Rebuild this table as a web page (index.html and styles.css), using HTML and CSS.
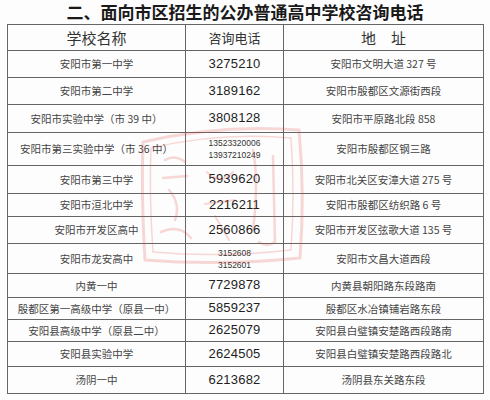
FILE: index.html
```html
<!DOCTYPE html>
<html lang="zh">
<head>
<meta charset="utf-8">
<link rel="stylesheet" href="styles.css">
</head>
<body>
<div class="page">
  <h1 class="title">二、面向市区招生的公办普通高中学校咨询电话</h1>
  <div class="wrap">
    <table class="tbl">
      <colgroup><col class="c1"><col class="c2"><col class="c3"></colgroup>
      <tr class="head h26"><th>学校名称</th><th class="th-tel">咨询电话</th><th>地&emsp;址</th></tr>
      <tr class="h27"><td>安阳市第一中学</td><td class="tel">3275210</td><td>安阳市文明大道 327 号</td></tr>
      <tr class="h27"><td>安阳市第二中学</td><td class="tel">3189162</td><td>安阳市殷都区文源街西段</td></tr>
      <tr class="h28"><td>安阳市实验中学（市 39 中）</td><td class="tel">3808128</td><td>安阳市平原路北段 858</td></tr>
      <tr class="h33"><td>安阳市第三实验中学（市 36 中）</td><td class="tel-sm">13523320006<br>13937210249</td><td>安阳市殷都区钢三路</td></tr>
      <tr class="h28"><td>安阳市第三中学</td><td class="tel">5939620</td><td>安阳市北关区安漳大道 275 号</td></tr>
      <tr class="h23"><td>安阳市洹北中学</td><td class="tel">2216211</td><td>安阳市殷都区纺织路 6 号</td></tr>
      <tr class="h27"><td>安阳市开发区高中</td><td class="tel">2560866</td><td>安阳市开发区弦歌大道 135 号</td></tr>
      <tr class="h30"><td>安阳市龙安高中</td><td class="tel-sm">3152608<br>3152601</td><td>安阳市文昌大道西段</td></tr>
      <tr class="h24"><td>内黄一中</td><td class="tel">7729878</td><td>内黄县朝阳路东段路南</td></tr>
      <tr class="h22"><td>殷都区第一高级中学（原县一中）</td><td class="tel">5859237</td><td>殷都区水冶镇铺岩路东段</td></tr>
      <tr class="h22"><td>安阳县高级中学（原县二中）</td><td class="tel">2625079</td><td>安阳县白璧镇安楚路西段路南</td></tr>
      <tr class="h25"><td>安阳县实验中学</td><td class="tel">2624505</td><td>安阳县白璧镇安楚路西段路北</td></tr>
      <tr class="h27"><td>汤阴一中</td><td class="tel">6213682</td><td>汤阴县东关路东段</td></tr>
    </table>
    <svg class="seal" width="175" height="150" viewBox="0 0 175 150">
      <g fill="none" stroke="#e0443c" stroke-linecap="round">
        <path stroke-width="3" d="M8 22 Q6 75 10 140 Q85 146 165 138 Q170 75 164 10 Q85 4 8 22"/>
        <path stroke-width="1.5" d="M16 28 Q14 75 18 132 Q85 138 156 130 Q160 75 156 18 Q85 12 16 28"/>
        <path stroke-width="2.5" d="M30 40 Q40 34 50 42 M28 58 L52 56 M34 70 Q46 84 40 100 M26 112 Q44 104 56 118"/>
        <path stroke-width="2.5" d="M118 30 Q124 60 118 110 M138 36 L140 122 Q132 128 124 122"/>
        <path stroke-width="2" d="M72 52 Q86 66 98 52 M70 84 L100 80 M80 96 L94 120"/>
      </g>
    </svg>
  </div>
</div>
</body>
</html>
```

FILE: styles.css
```css
html, body {
  margin: 0;
  padding: 0;
  background: #fdfdfd;
}
.page {
  width: 490px;
  height: 400px;
  font-family: "Noto Sans CJK SC", "Microsoft YaHei", sans-serif;
  color: #333;
}
.title {
  margin: 0;
  height: 24px;
  line-height: 24px;
  font-size: 17px;
  font-weight: 700;
  text-align: center;
  color: #1a1a1a;
}
.wrap {
  position: relative;
  margin-left: 7px;
  width: 476px;
}
.tbl {
  width: 476px;
  border-collapse: collapse;
  table-layout: fixed;
  border: 1.5px solid #555;
}
.c1 { width: 178px; }
.c2 { width: 98px; }
.c3 { width: 200px; }
.tbl th, .tbl td {
  border: 1px solid #666;
  padding: 0;
  text-align: center;
  vertical-align: middle;
  white-space: nowrap;
  overflow: hidden;
}
.tbl th {
  font-size: 15px;
  font-weight: 400;
  color: #333;
}
.tbl th.th-tel {
  font-size: 13px;
}
.tbl td {
  font-size: 10.5px;
  color: #444;
  line-height: 1.1;
}
.tbl td.tel {
  font-family: "Liberation Sans", "Open Sans", sans-serif;
  font-size: 13px;
  color: #1e1e1e;
  letter-spacing: 0.2px;
}
.tbl td.tel-sm {
  font-family: "Liberation Sans", "Open Sans", sans-serif;
  font-size: 8.5px;
  line-height: 12px;
  color: #333;
}
.h22 { height: 22px; }
.h23 { height: 23px; }
.h24 { height: 24px; }
.h25 { height: 25px; }
.h26 { height: 26px; }
.h27 { height: 27px; }
.h28 { height: 28px; }
.h30 { height: 30px; }
.h33 { height: 33px; }
.seal {
  position: absolute;
  left: 128px;
  top: 96px;
  opacity: 0.2;
  pointer-events: none;
}
```
